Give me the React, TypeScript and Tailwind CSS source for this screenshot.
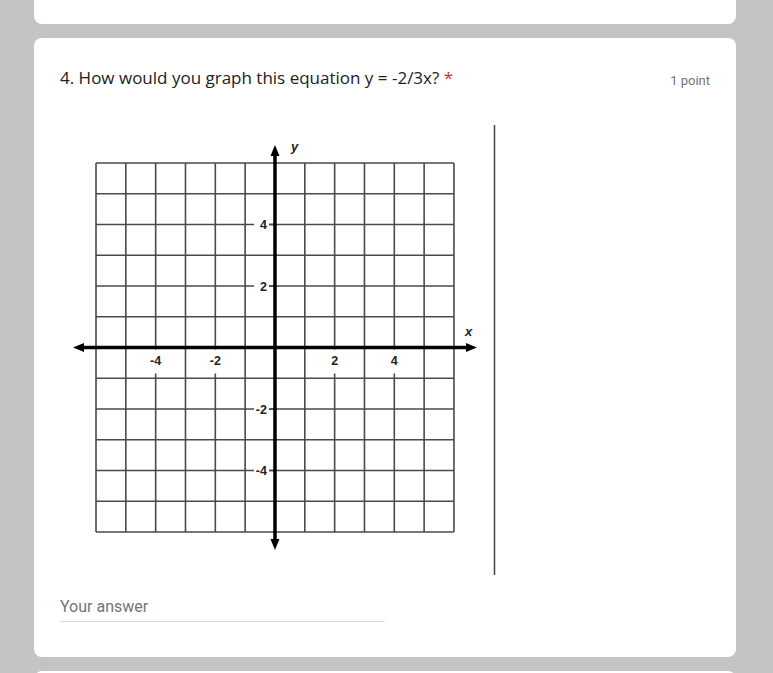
import React from 'react';

const GX0 = 96;
const GX = 29.83;
const GY0 = 162;
const GY = 30.75;

const xLabels: { i: number; t: string }[] = [
  { i: 2, t: '-4' },
  { i: 4, t: '-2' },
  { i: 8, t: '2' },
  { i: 10, t: '4' },
];
const yLabels: { j: number; t: string }[] = [
  { j: 2, t: '4' },
  { j: 4, t: '2' },
  { j: 8, t: '-2' },
  { j: 10, t: '-4' },
];

const Graph: React.FC = () => {
  const axisX = GX0 + GX * 6;
  const axisY = GY0 + GY * 6;
  const right = GX0 + GX * 12;
  const bottom = GY0 + GY * 12;
  return (
    <svg width="436" height="450" viewBox="60 124 436 450" className="block">
      <rect x="60" y="124" width="436" height="450" fill="#fff" />
      {Array.from({ length: 13 }).map((_, i) => (
        <line key={'v' + i} x1={GX0 + GX * i} y1={GY0} x2={GX0 + GX * i} y2={bottom} stroke="#4a4a4a" strokeWidth="1.6" />
      ))}
      {Array.from({ length: 13 }).map((_, j) => (
        <line key={'h' + j} x1={GX0} y1={GY0 + GY * j} x2={right} y2={GY0 + GY * j} stroke="#4a4a4a" strokeWidth="1.6" />
      ))}
      {/* label gaps */}
      {xLabels.map((l) => (
        <rect key={'xg' + l.i} x={GX0 + GX * l.i - 6} y={axisY + 2} width="12" height="24" fill="#fff" />
      ))}
      {yLabels.map((l) => (
        <rect key={'yg' + l.j} x={axisX - 21} y={GY0 + GY * l.j - 6} width="15" height="12" fill="#fff" />
      ))}
      {yLabels.map((l) => (
        <line key={'yt' + l.j} x1={axisX - 6} y1={GY0 + GY * l.j} x2={axisX} y2={GY0 + GY * l.j} stroke="#4a4a4a" strokeWidth="1.6" />
      ))}
      {/* axes */}
      <line x1="80" y1={axisY} x2="470" y2={axisY} stroke="#000" strokeWidth="3.5" />
      <line x1={axisX} y1="152" x2={axisX} y2="542" stroke="#000" strokeWidth="3.5" />
      <polygon points={`73,${axisY} 84,${axisY - 4.5} 84,${axisY + 4.5}`} fill="#000" />
      <polygon points={`477,${axisY} 466,${axisY - 4.5} 466,${axisY + 4.5}`} fill="#000" />
      <polygon points={`${axisX},144 ${axisX - 4.5},155 ${axisX + 4.5},155`} fill="#000" />
      <polygon points={`${axisX},549 ${axisX - 4.5},538 ${axisX + 4.5},538`} fill="#000" />
      <g fontFamily="'Liberation Sans', Arial, sans-serif" fontWeight="bold" fontSize="12.5" fill="#222">
        {xLabels.map((l) => (
          <text key={'xl' + l.i} x={GX0 + GX * l.i} y={axisY + 17} textAnchor="middle">{l.t}</text>
        ))}
        {yLabels.map((l) => (
          <text key={'yl' + l.j} x={axisX - 8} y={GY0 + GY * l.j + 4.5} textAnchor="end">{l.t}</text>
        ))}
        <text x="291" y="150" fontStyle="italic" fontSize="13">y</text>
        <text x="465" y="335" fontStyle="italic" fontSize="13">x</text>
      </g>
      <line x1="494.5" y1="124" x2="494.5" y2="574" stroke="#444" strokeWidth="1.5" />
    </svg>
  );
};

export default function App() {
  return (
    <div className="h-[673px] w-[773px] overflow-hidden bg-[#c4c4c4] font-['Roboto',sans-serif]">
      <div className="ml-[34px] mr-[37px] flex flex-col gap-[14px]">
        <div className="h-[24px] rounded-b-lg bg-white" />
        <div className="h-[619px] rounded-lg bg-white pl-[26px] pr-[26px] pt-[28px]">
          <div className="flex items-start justify-between">
            <div className="font-['Open_Sans',sans-serif] text-[17px] leading-6 text-[#202124]">
              4. How would you graph this equation y = -2/3x? <span className="text-[#d93025]">*</span>
            </div>
            <div className="pt-[3px] text-[13px] leading-6 text-[#70757a]">1 point</div>
          </div>
          <div className="mt-[32px]">
            <Graph />
          </div>
          <div className="mt-[22px] w-[325px] border-b border-[#dadce0] pb-[4px] text-[16px] leading-5 text-[#70757a]">
            Your answer
          </div>
        </div>
        <div className="h-[40px] rounded-t-lg bg-white" />
      </div>
    </div>
  );
}
